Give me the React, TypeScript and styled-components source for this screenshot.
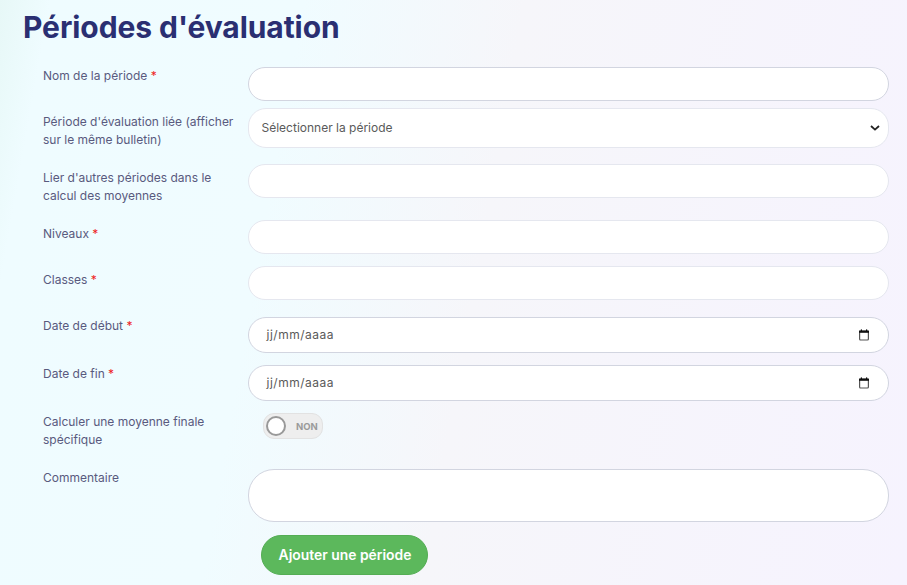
import * as React from "react";
import styled, { createGlobalStyle } from "styled-components";

const GlobalStyle = createGlobalStyle`
  html, body {
    margin: 0;
    padding: 0;
    height: 100%;
    overflow: hidden;
  }
  body {
    font-family: Inter, "Liberation Sans", sans-serif;
  }
`;

const CalendarIcon = () => (
  <svg width="12" height="12" viewBox="0 0 12 12" fill="none">
    <rect x="1.6" y="2" width="8.8" height="9" rx="1" stroke="#555" strokeWidth="1.2" />
    <rect x="1" y="1.6" width="10" height="2.2" fill="#111" />
    <rect x="2.8" y="0.4" width="1.2" height="2" fill="#111" />
    <rect x="8" y="0.4" width="1.2" height="2" fill="#111" />
  </svg>
);

const App = () => {
  return (
    <Page>
      <GlobalStyle />
      <Title>Périodes d'évaluation</Title>
      <Form onSubmit={(e) => e.preventDefault()}>
        <Row $height={41}>
          <Label $top={0}>
            Nom de la période <Star>*</Star>
          </Label>
          <TextInput $height={34} />
        </Row>
        <Row $height={56}>
          <Label $top={5}>Période d'évaluation liée (afficher sur le même bulletin)</Label>
          <Select defaultValue="">
            <option value="">Sélectionner la période</option>
          </Select>
        </Row>
        <Row $height={56}>
          <Label $top={5}>Lier d'autres périodes dans le calcul des moyennes</Label>
          <TextInput $height={34} $soft />
        </Row>
        <Row $height={46}>
          <Label $top={5}>
            Niveaux <Star>*</Star>
          </Label>
          <TextInput $height={34} $soft />
        </Row>
        <Row $height={51}>
          <Label $top={5}>
            Classes <Star>*</Star>
          </Label>
          <TextInput $height={34} $soft />
        </Row>
        <Row $height={48}>
          <Label $top={0}>
            Date de début <Star>*</Star>
          </Label>
          <DateField>
            <DateText>jj/mm/aaaa</DateText>
            <CalendarIcon />
          </DateField>
        </Row>
        <Row $height={48}>
          <Label $top={0}>
            Date de fin <Star>*</Star>
          </Label>
          <DateField>
            <DateText>jj/mm/aaaa</DateText>
            <CalendarIcon />
          </DateField>
        </Row>
        <Row $height={56}>
          <Label $top={0}>Calculer une moyenne finale spécifique</Label>
          <Toggle>
            <Knob />
            <ToggleText>NON</ToggleText>
          </Toggle>
        </Row>
        <Row $height={66}>
          <Label $top={0}>Commentaire</Label>
          <Comment />
        </Row>
        <Actions>
          <Submit type="submit">Ajouter une période</Submit>
        </Actions>
      </Form>
    </Page>
  );
};

export default App;

const Page = styled.div`
  box-sizing: border-box;
  width: 907px;
  height: 585px;
  padding: 9px 18px 0 23px;
  overflow: hidden;
  background: linear-gradient(100deg, #e7f8f7 0%, #effcff 5%, #f0fcff 30%, #f6f6fa 52%, #f6f3fe 100%);
`;

const Title = styled.h1`
  margin: 0 0 21px;
  font-size: 30px;
  line-height: 37px;
  font-weight: 700;
  letter-spacing: -0.07px;
  color: #2a2f72;
`;

const Form = styled.form`
  display: flex;
  flex-direction: column;
  padding-left: 20px;
`;

const Row = styled.div<{ $height: number }>`
  display: grid;
  grid-template-columns: 205px 1fr;
  align-items: start;
  height: ${(p) => p.$height}px;
`;

const Label = styled.label<{ $top: number }>`
  display: block;
  padding-top: ${(p) => p.$top}px;
  padding-right: 10px;
  font-size: 12px;
  line-height: 18px;
  color: #595a7e;
`;

const Star = styled.span`
  color: #ee1c25;
`;

const TextInput = styled.input<{ $height: number; $soft?: boolean }>`
  box-sizing: border-box;
  width: 100%;
  height: ${(p) => p.$height}px;
  padding: 0 13px;
  border: 1px solid ${(p) => (p.$soft ? "#e5e7ef" : "#d2d5e0")};
  border-radius: 17px;
  background: #fff;
  outline: none;
`;

const Select = styled.select`
  box-sizing: border-box;
  width: 100%;
  height: 40px;
  padding: 0 30px 1px 12.5px;
  border: 1px solid #e5e7ef;
  border-radius: 18px;
  appearance: none;
  background: #fff url("data:image/svg+xml,%3Csvg xmlns='http://www.w3.org/2000/svg' width='10' height='6' viewBox='0 0 10 6'%3E%3Cpath d='M1 1l4 3.6L9 1' fill='none' stroke='%23222' stroke-width='1.8'/%3E%3C/svg%3E") no-repeat right 8px center;
  font-family: Inter, "Liberation Sans", sans-serif;
  font-size: 12px;
  color: #5a5a5a;
  outline: none;
`;

const DateField = styled.div`
  box-sizing: border-box;
  display: flex;
  align-items: center;
  justify-content: space-between;
  height: 36px;
  padding: 0 18px 1px 17.5px;
  border: 1px solid #d2d5e0;
  border-radius: 18px;
  background: #fff;
`;

const DateText = styled.span`
  font-size: 12px;
  letter-spacing: 0.5px;
  color: #5a5a5a;
`;

const Toggle = styled.div`
  box-sizing: border-box;
  display: flex;
  align-items: center;
  width: 60px;
  height: 26px;
  margin-left: 15px;
  padding-left: 2px;
  border: 1px solid #e2e2e2;
  border-radius: 11px;
  background: #eeeeee;
`;

const Knob = styled.span`
  box-sizing: border-box;
  width: 20px;
  height: 20px;
  border: 2.5px solid #999;
  border-radius: 50%;
  background: #fff;
`;

const ToggleText = styled.span`
  margin-left: 10px;
  font-size: 9.5px;
  font-weight: 700;
  color: #9a9a9a;
`;

const Comment = styled.textarea`
  box-sizing: border-box;
  display: block;
  width: 100%;
  height: 53px;
  padding: 8px 13px;
  border: 1px solid #d2d5e0;
  border-radius: 26px;
  background: #fff;
  outline: none;
  resize: none;
`;

const Actions = styled.div`
  display: flex;
  padding-left: 218px;
`;

const Submit = styled.button`
  width: 167px;
  height: 40px;
  padding: 0 0 0 1px;
  border: 1px solid #54ad54;
  border-radius: 20px;
  background: #5cb85c;
  font-family: Inter, "Liberation Sans", sans-serif;
  font-size: 13.9px;
  font-weight: 600;
  color: #fff;
  cursor: pointer;
`;
